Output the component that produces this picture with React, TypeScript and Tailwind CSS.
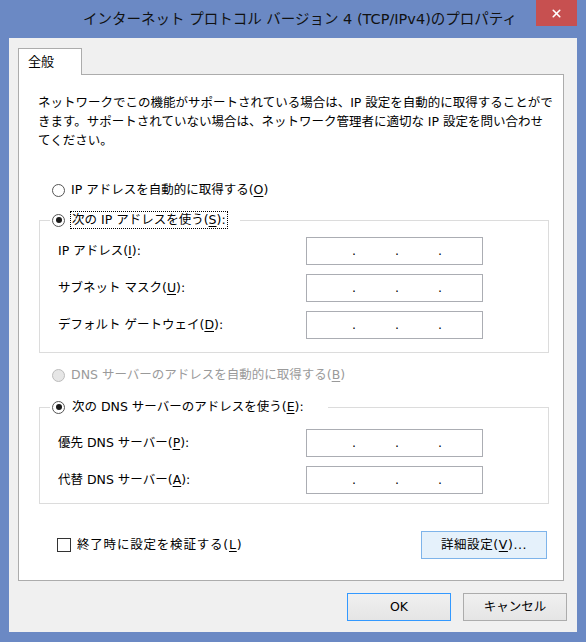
import { X } from 'lucide-react';

function Radio({ checked, disabled }: { checked?: boolean; disabled?: boolean }) {
  return (
    <span
      className={`flex h-[13px] w-[13px] shrink-0 items-center justify-center rounded-full border ${
        disabled ? 'border-[#bcbcbc] bg-[#e6e6e6]' : 'border-[#555555] bg-white'
      }`}
    >
      {checked && <span className="h-[6px] w-[6px] rounded-full bg-[#1a1a1a]" />}
    </span>
  );
}

function IpBox() {
  return (
    <div className="flex h-[28px] w-[177px] items-center border border-[#abadb3] bg-white pl-[45px] leading-[20px]">
      <span className="w-[43px]">.</span>
      <span className="w-[43px]">.</span>
      <span>.</span>
    </div>
  );
}

function Field({ label, keyChar }: { label: string; keyChar: string }) {
  return (
    <div className="ml-[8px] flex items-center">
      <span className="w-[248px] whitespace-nowrap">
        {label}(<span className="underline underline-offset-2">{keyChar}</span>):
      </span>
      <IpBox />
    </div>
  );
}

export default function App() {
  return (
    <div className="flex h-[642px] w-[586px] flex-col bg-[#6b89c4] font-['DejaVu_Sans','Noto_Sans_CJK_JP',sans-serif] text-[12.5px] text-black">
      {/* title bar */}
      <div className="relative flex h-[38px] items-center justify-center pt-[2px] pl-[14px]">
        <span className="text-[14.5px] whitespace-nowrap text-[#111]">
          インターネット プロトコル バージョン 4 (TCP/IPv4)のプロパティ
        </span>
        <div className="absolute top-0 right-[9px] flex h-[26px] w-[41px] items-center justify-center bg-[#c75050]">
          <X size={13} strokeWidth={3} color="#ffffff" />
        </div>
      </div>

      {/* client area */}
      <div className="mx-[9px] flex h-[594px] flex-col bg-[#f0f0f0] pt-[10px] pr-[10px] pl-[9px]">
        <div className="flex h-[26px] items-start">
          <div className="relative z-10 flex h-[27px] w-[64px] items-center border border-b-0 border-[#acacac] bg-white pl-[9px] text-[13px]">
            全般
          </div>
        </div>

        <div className="flex h-[507px] w-[546px] flex-col border border-[#acacac] bg-white pr-[16px] pl-[19px]">
          <div className="mt-[18px] leading-[19px] whitespace-nowrap">
            <div>ネットワークでこの機能がサポートされている場合は、IP 設定を自動的に取得することがで</div>
            <div>きます。サポートされていない場合は、ネットワーク管理者に適切な IP 設定を問い合わせ</div>
            <div>てください。</div>
          </div>

          <div className="mt-[30px] ml-[14px] flex h-[20px] items-center gap-[6px]">
            <Radio />
            <span>
              IP アドレスを自動的に取得する(<span className="underline underline-offset-2">O</span>)
            </span>
          </div>

          <fieldset className="mt-[10px] ml-[1px] w-[510px] border border-[#dcdcdc] pb-[13px] pl-[10px]">
            <legend className="flex h-[20px] items-center gap-[5px] pr-[12px] pl-[2px]">
              <Radio checked />
              <span className="border border-dotted border-black px-[1px] leading-[16px]">
                次の IP アドレスを使う(<span className="underline underline-offset-2">S</span>):
              </span>
            </legend>
            <div className="mt-[7px] flex flex-col gap-[9px]">
              <Field label="IP アドレス" keyChar="I" />
              <Field label="サブネット マスク" keyChar="U" />
              <Field label="デフォルト ゲートウェイ" keyChar="D" />
            </div>
          </fieldset>

          <div className="mt-[12px] ml-[14px] flex h-[20px] items-center gap-[6px] text-[#9a9a9a]">
            <Radio disabled />
            <span>
              DNS サーバーのアドレスを自動的に取得する(<span className="underline underline-offset-2">B</span>)
            </span>
          </div>

          <fieldset className="mt-[12px] ml-[1px] w-[510px] border border-[#dcdcdc] pb-[9px] pl-[10px]">
            <legend className="flex h-[20px] items-center gap-[5px] pr-[22px] pl-[2px]">
              <Radio checked />
              <span className="border border-transparent px-[1px] leading-[16px]">
                次の DNS サーバーのアドレスを使う(<span className="underline underline-offset-2">E</span>):
              </span>
            </legend>
            <div className="mt-[12px] flex flex-col gap-[9px]">
              <Field label="優先 DNS サーバー" keyChar="P" />
              <Field label="代替 DNS サーバー" keyChar="A" />
            </div>
          </fieldset>

          <div className="mt-[27px] flex h-[28px] items-center justify-between">
            <div className="ml-[19px] flex items-center gap-[6px]">
              <span className="h-[14px] w-[14px] border border-[#333333] bg-white" />
              <span className="tracking-[0.8px]">
                終了時に設定を検証する(<span className="underline underline-offset-2">L</span>)
              </span>
            </div>
            <div className="flex h-[28px] w-[126px] items-center justify-center border border-[#7eb4ea] bg-[#e5f1fb] tracking-[0.6px]">
              詳細設定(<span className="underline underline-offset-2">V</span>)...
            </div>
          </div>
        </div>

        <div className="mt-[12px] flex justify-end gap-[12px]">
          <div className="flex h-[28px] w-[104px] items-center justify-center border border-[#3399ff] bg-linear-to-b from-[#f0f0f0] to-[#e5e5e5]">
            OK
          </div>
          <div className="flex h-[28px] w-[104px] items-center justify-center border border-[#acacac] bg-linear-to-b from-[#f0f0f0] to-[#e5e5e5]">
            キャンセル
          </div>
        </div>
      </div>
    </div>
  );
}
